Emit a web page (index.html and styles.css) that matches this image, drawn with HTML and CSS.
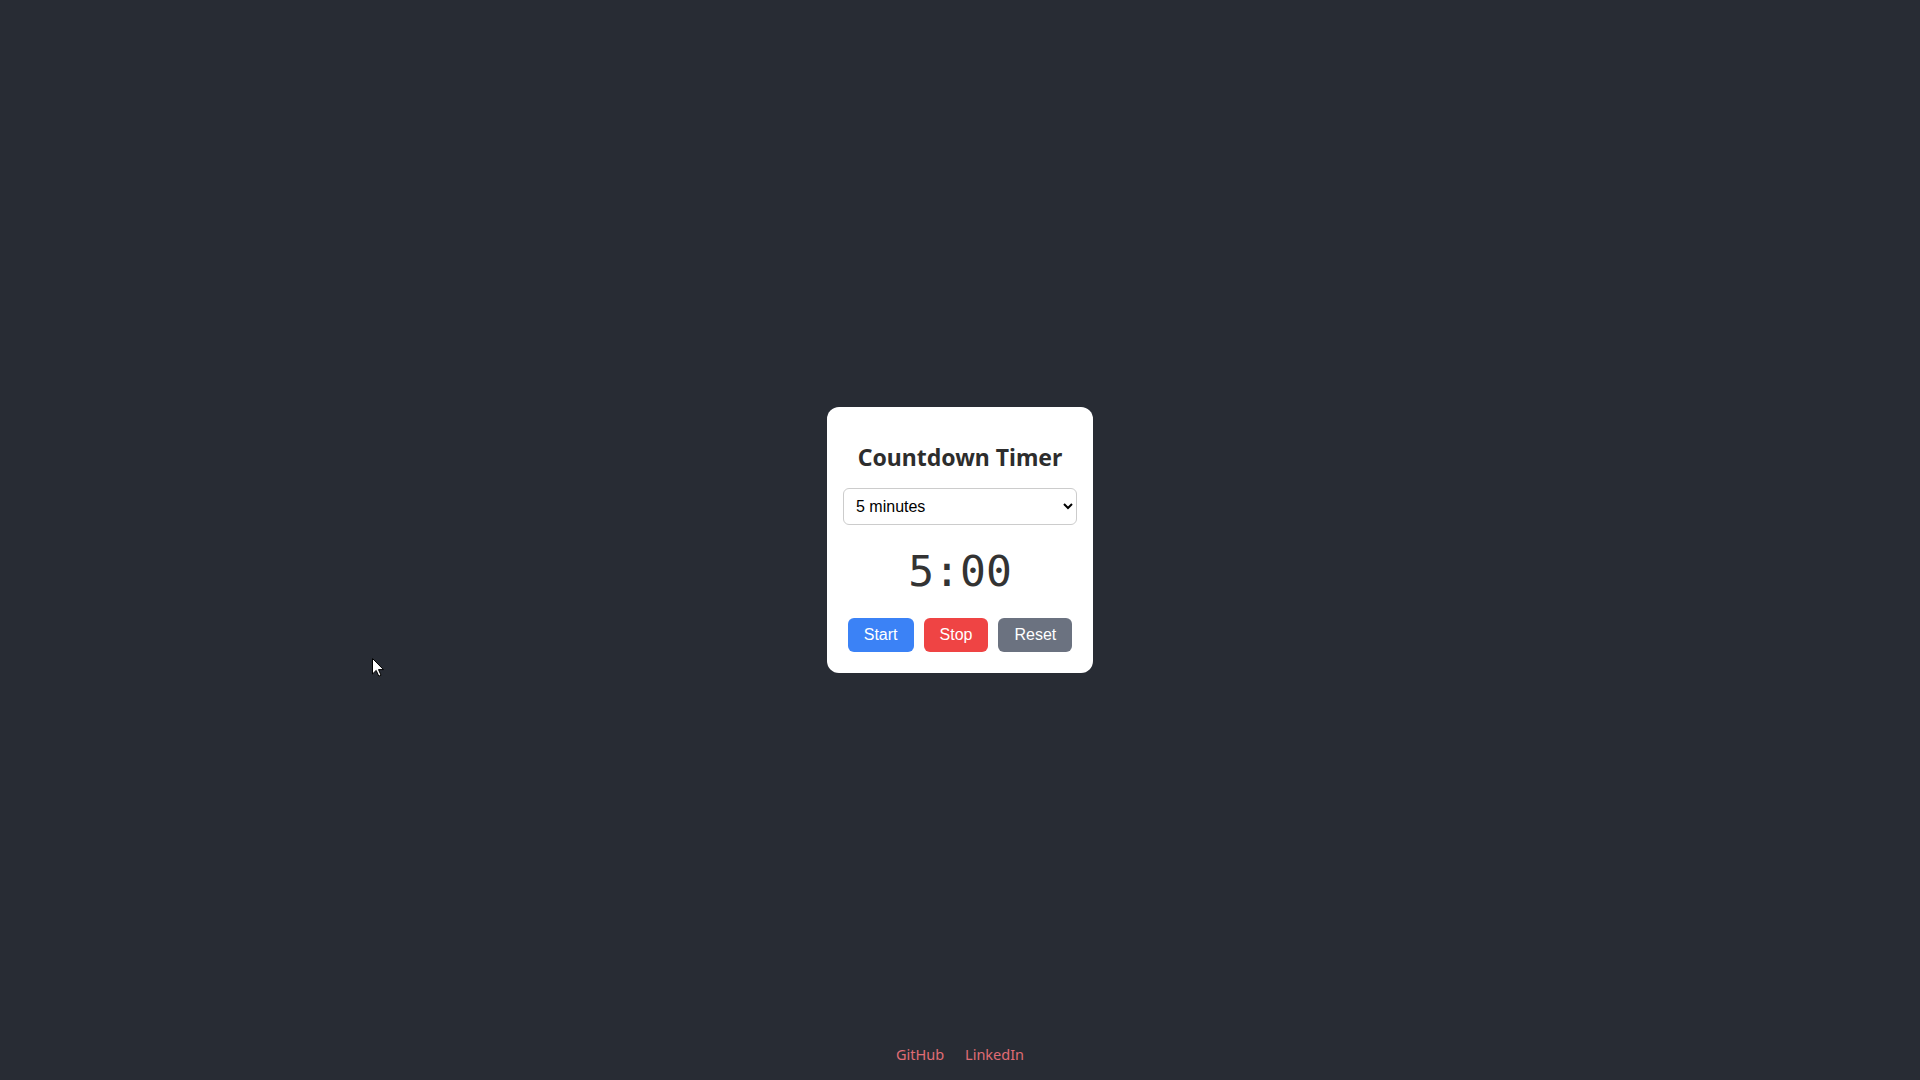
FILE: index.html
```html
<!DOCTYPE html>
<html lang="en">
<head>
<meta charset="utf-8">
<title>Countdown Timer</title>
<link rel="stylesheet" href="styles.css">
</head>
<body>
<div class="page">
  <main class="card">
    <h2 class="title">Countdown Timer</h2>
    <select class="picker">
      <option>1 minute</option>
      <option selected>5 minutes</option>
      <option>10 minutes</option>
    </select>
    <div class="time">5:00</div>
    <div class="actions">
      <button class="btn btn-start">Start</button>
      <button class="btn btn-stop">Stop</button>
      <button class="btn btn-reset">Reset</button>
    </div>
  </main>
  <footer class="footer">
    <a href="#" class="link">GitHub</a>
    <a href="#" class="link">LinkedIn</a>
  </footer>
</div>
<svg class="cursor" width="13" height="19" viewBox="0 0 13 19"><path d="M0.5 0.5 L0.5 16 L4.2 12.4 L6.8 18.2 L9 17.2 L6.5 11.6 L11.5 11.6 Z" fill="#fff" stroke="#000" stroke-width="1"/></svg>
</body>
</html>
```
FILE: styles.css
```css
* { box-sizing: border-box; }
html, body { margin: 0; height: 100%; }
body {
  background: #282c34;
  font-family: "Liberation Sans", Arial, sans-serif;
}
.page {
  height: 100vh;
  display: grid;
  grid-template-rows: 1fr auto 1fr;
  justify-items: center;
}
.card {
  grid-row: 2;
  width: 266px;
  background: #fff;
  border-radius: 12px;
  padding: 16px 16px 21px;
  display: flex;
  flex-direction: column;
  align-items: stretch;
}
.title {
  margin: 19px 0 16px;
  text-align: center;
  font-family: "Noto Sans", "Open Sans", sans-serif;
  font-weight: 700;
  font-size: 23px;
  line-height: 30px;
  color: #2d2d2d;
}
.picker {
  height: 37px;
  width: 100%;
  border: 1px solid #ccc;
  border-radius: 6px;
  padding: 0 8px;
  font-family: "Liberation Sans", Arial, sans-serif;
  font-size: 16px;
  color: #000;
  background: #fff;
}
.time {
  margin: 18px 0 0;
  text-align: center;
  font-family: "DejaVu Sans Mono", "Liberation Mono", monospace;
  font-size: 43px;
  line-height: 56px;
  color: #333;
}
.actions {
  margin-top: 19px;
  display: flex;
  justify-content: center;
  gap: 10px;
}
.btn {
  border: none;
  border-radius: 6px;
  padding: 0 16px;
  height: 34px;
  font-family: "Liberation Sans", Arial, sans-serif;
  font-size: 16px;
  color: #fff;
  cursor: pointer;
}
.btn-start { background: #3b82f6; }
.btn-stop { background: #ef4444; }
.btn-reset { background: #6b7280; }
.footer {
  grid-row: 3;
  align-self: end;
  display: flex;
  gap: 21px;
  padding-bottom: 16px;
}
.link {
  font-family: "Noto Sans", "Open Sans", sans-serif;
  font-size: 14.5px;
  color: #e06c75;
  text-decoration: none;
}
.cursor {
  position: absolute;
  left: 372px;
  top: 658px;
}
```
